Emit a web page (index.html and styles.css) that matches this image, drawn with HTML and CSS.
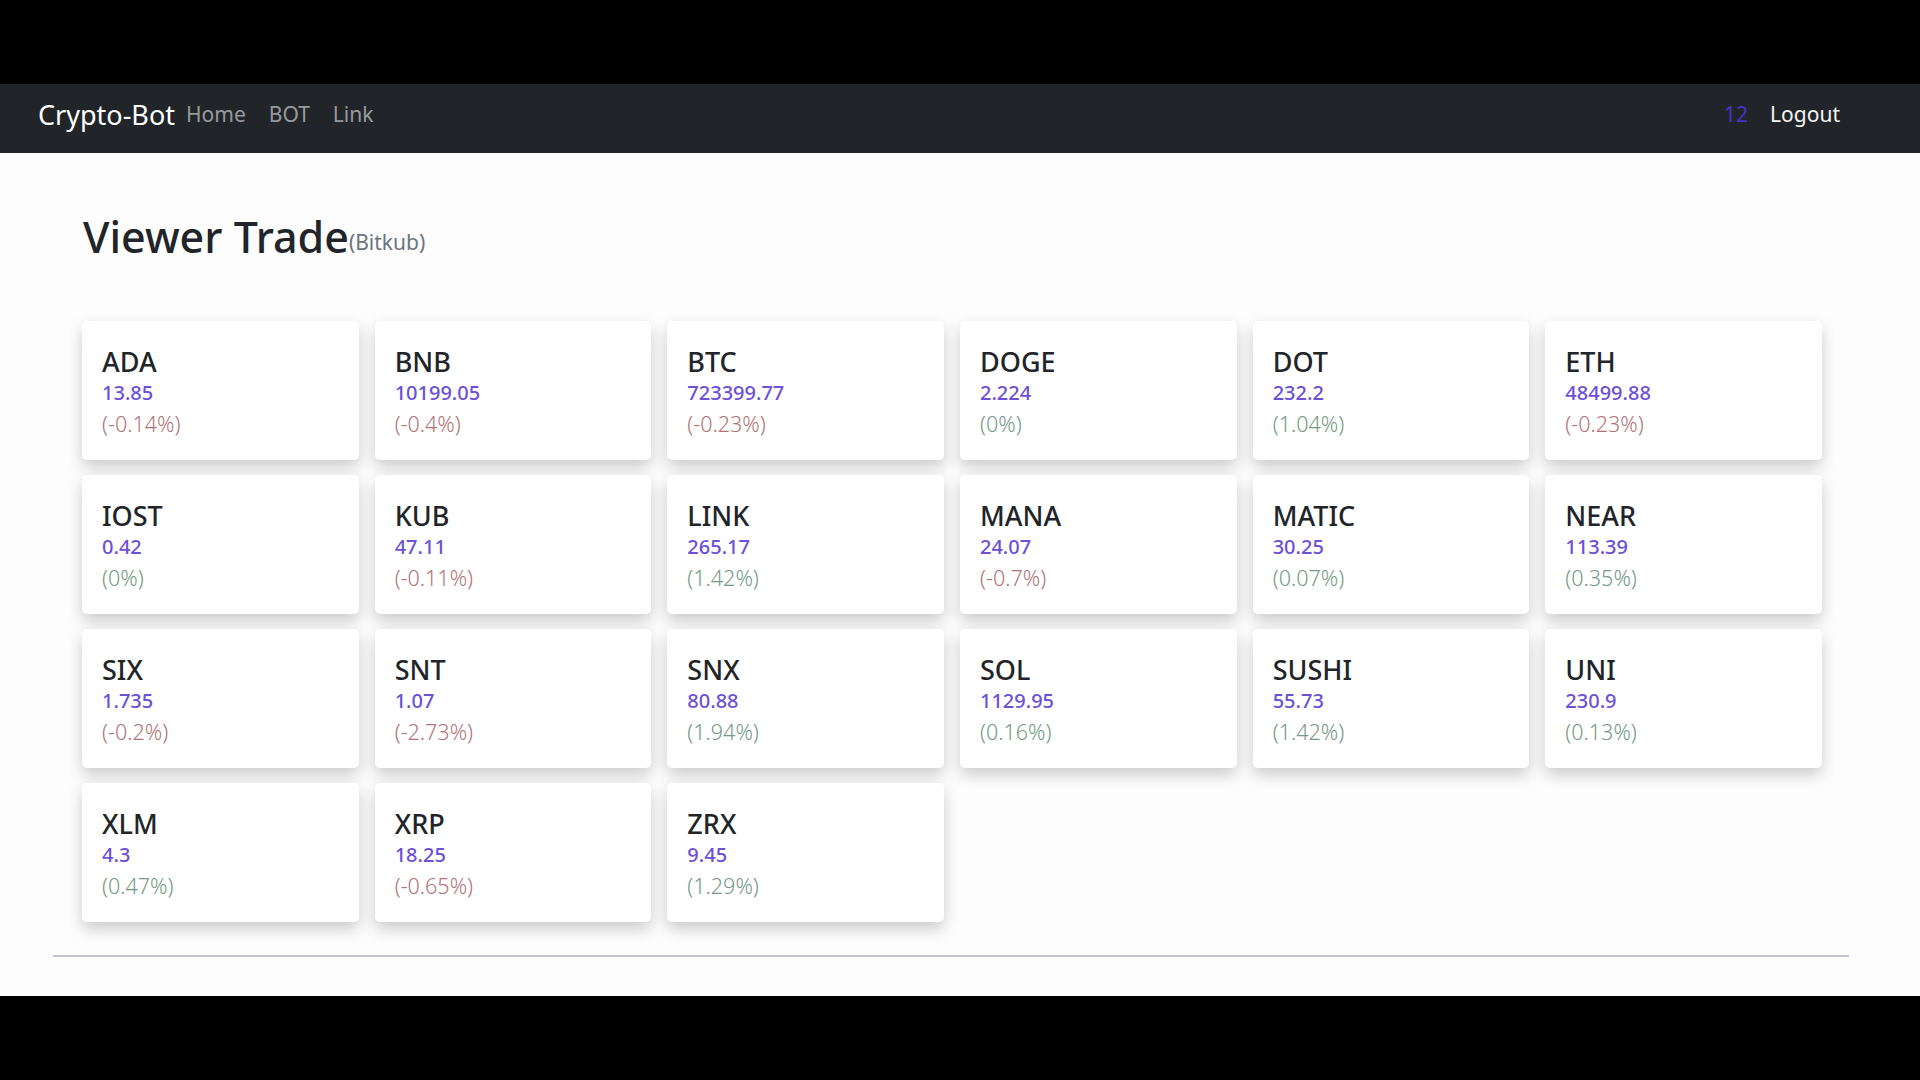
FILE: index.html
```html
<!DOCTYPE html>
<html lang="en">
<head>
<meta charset="utf-8">
<title>Crypto-Bot</title>
<link rel="stylesheet" href="styles.css">
</head>
<body>
<div class="frame">
  <div class="letterbox"></div>
  <nav class="navbar">
    <div class="nav-left">
      <a class="brand">Crypto-Bot</a>
      <a class="nav-link">Home</a>
      <a class="nav-link">BOT</a>
      <a class="nav-link">Link</a>
    </div>
    <div class="nav-right">
      <span class="badge-num">12</span>
      <a class="logout">Logout</a>
    </div>
  </nav>
  <main class="page">
    <h1 class="title">Viewer Trade<small class="sub">(Bitkub)</small></h1>
    <div class="grid">
      <div class="card"><div class="sym">ADA</div><div class="price">13.85</div><div class="chg neg">(-0.14%)</div></div>
      <div class="card"><div class="sym">BNB</div><div class="price">10199.05</div><div class="chg neg">(-0.4%)</div></div>
      <div class="card"><div class="sym">BTC</div><div class="price">723399.77</div><div class="chg neg">(-0.23%)</div></div>
      <div class="card"><div class="sym">DOGE</div><div class="price">2.224</div><div class="chg pos">(0%)</div></div>
      <div class="card"><div class="sym">DOT</div><div class="price">232.2</div><div class="chg pos">(1.04%)</div></div>
      <div class="card"><div class="sym">ETH</div><div class="price">48499.88</div><div class="chg neg">(-0.23%)</div></div>
      <div class="card"><div class="sym">IOST</div><div class="price">0.42</div><div class="chg pos">(0%)</div></div>
      <div class="card"><div class="sym">KUB</div><div class="price">47.11</div><div class="chg neg">(-0.11%)</div></div>
      <div class="card"><div class="sym">LINK</div><div class="price">265.17</div><div class="chg pos">(1.42%)</div></div>
      <div class="card"><div class="sym">MANA</div><div class="price">24.07</div><div class="chg neg">(-0.7%)</div></div>
      <div class="card"><div class="sym">MATIC</div><div class="price">30.25</div><div class="chg pos">(0.07%)</div></div>
      <div class="card"><div class="sym">NEAR</div><div class="price">113.39</div><div class="chg pos">(0.35%)</div></div>
      <div class="card"><div class="sym">SIX</div><div class="price">1.735</div><div class="chg neg">(-0.2%)</div></div>
      <div class="card"><div class="sym">SNT</div><div class="price">1.07</div><div class="chg neg">(-2.73%)</div></div>
      <div class="card"><div class="sym">SNX</div><div class="price">80.88</div><div class="chg pos">(1.94%)</div></div>
      <div class="card"><div class="sym">SOL</div><div class="price">1129.95</div><div class="chg pos">(0.16%)</div></div>
      <div class="card"><div class="sym">SUSHI</div><div class="price">55.73</div><div class="chg pos">(1.42%)</div></div>
      <div class="card"><div class="sym">UNI</div><div class="price">230.9</div><div class="chg pos">(0.13%)</div></div>
      <div class="card"><div class="sym">XLM</div><div class="price">4.3</div><div class="chg pos">(0.47%)</div></div>
      <div class="card"><div class="sym">XRP</div><div class="price">18.25</div><div class="chg neg">(-0.65%)</div></div>
      <div class="card"><div class="sym">ZRX</div><div class="price">9.45</div><div class="chg pos">(1.29%)</div></div>
    </div>
    <hr class="rule">
  </main>
  <div class="letterbox bottom"></div>
</div>
</body>
</html>
```
FILE: styles.css
```css
html, body {
  margin: 0;
  padding: 0;
  background: #000;
}
.frame {
  width: 1920px;
  height: 1080px;
  display: flex;
  flex-direction: column;
  font-family: "Noto Sans", "Open Sans", sans-serif;
  overflow: hidden;
}
.letterbox {
  height: 84px;
  background: #000;
  flex: none;
}
.letterbox.bottom {
  height: 84px;
}
.navbar {
  height: 69px;
  box-sizing: border-box;
  flex: none;
  background: #212529;
  display: flex;
  align-items: center;
  justify-content: space-between;
  padding: 0 80px 9px 38px;
}
.nav-left, .nav-right {
  display: flex;
  align-items: center;
}
.brand {
  color: #fff;
  font-size: 27px;
  margin-right: 11px;
}
.nav-link {
  color: rgba(255,255,255,0.55);
  font-size: 21px;
  margin-right: 23px;
}
.badge-num {
  color: #4a30c4;
  font-size: 21px;
  margin-right: 22px;
}
.logout {
  color: #f4f4f4;
  font-size: 21px;
}
.page {
  flex: 1;
  background: #fdfdfd;
  padding: 58px 0 0 0;
  display: flex;
  flex-direction: column;
}
.title {
  margin: 0 0 0 83px;
  font-size: 43px;
  font-weight: 500;
  color: #212529;
  line-height: 1.2;
}
.sub {
  font-size: 21px;
  font-weight: 400;
  color: #6c757d;
  vertical-align: 3px;
}
.grid {
  margin: 58px 0 0 82px;
  width: 1740px;
  display: grid;
  grid-template-columns: repeat(6, 1fr);
  gap: 15px 16px;
}
.card {
  height: 139px;
  box-sizing: border-box;
  background: #fff;
  border-radius: 5px;
  box-shadow: 0 7px 16px rgba(0,0,0,0.2);
  padding: 25px 20px 0;
}
.sym {
  font-size: 27px;
  font-weight: 500;
  line-height: 32px;
  color: #212529;
}
.price {
  font-size: 20px;
  font-weight: 500;
  line-height: 30px;
  color: #6c50d6;
}
.chg {
  font-size: 21.5px;
  font-weight: 300;
  line-height: 32px;
}
.neg { color: #b07478; }
.pos { color: #749a86; }
.rule {
  margin: 33px 0 0 53px;
  width: 1796px;
  border: 0;
  border-top: 2px solid #c6c7ce;
  height: 0;
}
```
